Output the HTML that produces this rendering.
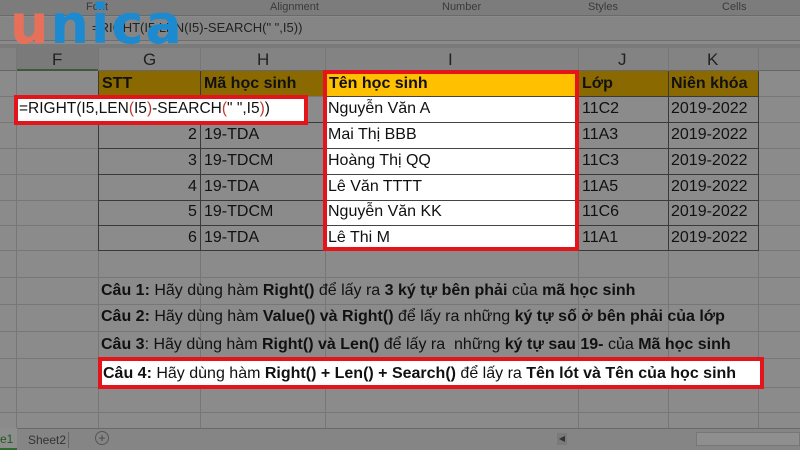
<!DOCTYPE html>
<html><head><meta charset="utf-8"><style>
*{margin:0;padding:0;box-sizing:border-box}
body{width:800px;height:450px;overflow:hidden;background:#8b8b8b;font-family:"Liberation Sans",sans-serif;position:relative}
.a{position:absolute}
.t{position:absolute;font-size:16px;color:#111;white-space:nowrap;line-height:26px}
.hl{position:absolute;background:#777;height:1px}
.vl{position:absolute;background:#777;width:1px}
b{font-weight:bold}
</style></head><body>
<div class="a" style="left:0;top:0;width:800px;height:16px;background:#7c7c7c;border-bottom:1px solid #6a6a6a"></div>
<div class="a" style="left:0;top:1px;width:800px;font-size:11px;color:#3a3a3a">
<span class="a" style="left:86px">Font</span><span class="a" style="left:270px">Alignment</span><span class="a" style="left:442px">Number</span><span class="a" style="left:588px">Styles</span><span class="a" style="left:722px">Cells</span></div>
<div class="a" style="left:0;top:17px;width:800px;height:24px;background:#858585;border-bottom:1px solid #6e6e6e"></div>
<div class="a" style="left:92px;top:20px;font-size:13px;color:#222">=RIGHT(I5,LEN(I5)-SEARCH(" ",I5))</div>
<div class="a" style="left:0;top:44px;width:800px;height:4px;background:#7a7a7a"></div>
<div class="a" style="left:0;top:48px;width:800px;height:23px;background:#838383;border-bottom:1px solid #666"></div>
<div class="a" style="left:16px;top:48px;width:82px;height:23px;background:#7a7a7a;border-bottom:2px solid #3d5a3d"></div>
<div class="a" style="top:50px;left:0;width:800px;font-size:17px;color:#222">
<span class="a" style="left:52px">F</span><span class="a" style="left:143px">G</span><span class="a" style="left:257px">H</span><span class="a" style="left:448px">I</span><span class="a" style="left:618px">J</span><span class="a" style="left:707px">K</span></div>
<div class="vl" style="left:16px;top:48px;height:380px"></div>
<div class="vl" style="left:98px;top:48px;height:380px"></div>
<div class="vl" style="left:200px;top:48px;height:380px"></div>
<div class="vl" style="left:325px;top:48px;height:380px"></div>
<div class="vl" style="left:578px;top:48px;height:380px"></div>
<div class="vl" style="left:668px;top:48px;height:380px"></div>
<div class="vl" style="left:758px;top:48px;height:380px"></div>
<div class="hl" style="left:0;top:96px;width:800px"></div>
<div class="hl" style="left:0;top:122px;width:800px"></div>
<div class="hl" style="left:0;top:148px;width:800px"></div>
<div class="hl" style="left:0;top:174px;width:800px"></div>
<div class="hl" style="left:0;top:200px;width:800px"></div>
<div class="hl" style="left:0;top:225px;width:800px"></div>
<div class="hl" style="left:0;top:250px;width:800px"></div>
<div class="hl" style="left:0;top:277px;width:800px"></div>
<div class="hl" style="left:0;top:304px;width:800px"></div>
<div class="hl" style="left:0;top:331px;width:800px"></div>
<div class="hl" style="left:0;top:358px;width:800px"></div>
<div class="hl" style="left:0;top:387px;width:800px"></div>
<div class="hl" style="left:0;top:412px;width:800px"></div>
<div class="a" style="left:99px;top:71px;width:226px;height:25px;background:#8a6a00"></div>
<div class="a" style="left:579px;top:71px;width:179px;height:25px;background:#8a6a00"></div>
<div class="vl" style="left:200px;top:71px;height:180px;background:#3a3a3a"></div>
<div class="vl" style="left:98px;top:71px;height:180px;background:#3a3a3a"></div>
<div class="vl" style="left:668px;top:71px;height:180px;background:#3a3a3a"></div>
<div class="vl" style="left:758px;top:71px;height:180px;background:#3a3a3a"></div>
<div class="a" style="left:98px;top:122px;width:227px;height:1px;background:#3a3a3a"></div>
<div class="a" style="left:98px;top:148px;width:227px;height:1px;background:#3a3a3a"></div>
<div class="a" style="left:98px;top:174px;width:227px;height:1px;background:#3a3a3a"></div>
<div class="a" style="left:98px;top:200px;width:227px;height:1px;background:#3a3a3a"></div>
<div class="a" style="left:98px;top:225px;width:227px;height:1px;background:#3a3a3a"></div>
<div class="a" style="left:98px;top:250px;width:227px;height:1px;background:#3a3a3a"></div>
<div class="a" style="left:578px;top:96px;width:181px;height:155px;border-top:1px solid #3a3a3a;border-bottom:1px solid #3a3a3a"></div>
<div class="a" style="left:578px;top:122px;width:181px;height:1px;background:#3a3a3a"></div>
<div class="a" style="left:578px;top:148px;width:181px;height:1px;background:#3a3a3a"></div>
<div class="a" style="left:578px;top:174px;width:181px;height:1px;background:#3a3a3a"></div>
<div class="a" style="left:578px;top:200px;width:181px;height:1px;background:#3a3a3a"></div>
<div class="a" style="left:578px;top:225px;width:181px;height:1px;background:#3a3a3a"></div>
<div class="a" style="left:323px;top:70px;width:256px;height:181px;border:4px solid #e4141b;background:#fff"></div>
<div class="a" style="left:327px;top:74px;width:248px;height:22px;background:#ffc000"></div>
<div class="a" style="left:327px;top:96px;width:248px;height:1px;background:#444"></div>
<div class="a" style="left:327px;top:122px;width:248px;height:1px;background:#444"></div>
<div class="a" style="left:327px;top:148px;width:248px;height:1px;background:#444"></div>
<div class="a" style="left:327px;top:174px;width:248px;height:1px;background:#444"></div>
<div class="a" style="left:327px;top:200px;width:248px;height:1px;background:#444"></div>
<div class="a" style="left:327px;top:225px;width:248px;height:1px;background:#444"></div>
<div class="t" style="left:102px;top:71px"><b>STT</b></div>
<div class="t" style="left:204px;top:71px"><b>Mã học sinh</b></div>
<div class="t" style="left:329px;top:71px"><b>Tên học sinh</b></div>
<div class="t" style="left:582px;top:71px"><b>Lớp</b></div>
<div class="t" style="left:671px;top:71px"><b>Niên khóa</b></div>
<div class="t" style="left:188px;top:122px">2</div><div class="t" style="left:204px;top:122px">19-TDA</div>
<div class="t" style="left:188px;top:148px">3</div><div class="t" style="left:204px;top:148px">19-TDCM</div>
<div class="t" style="left:188px;top:174px">4</div><div class="t" style="left:204px;top:174px">19-TDA</div>
<div class="t" style="left:188px;top:199px">5</div><div class="t" style="left:204px;top:199px">19-TDCM</div>
<div class="t" style="left:188px;top:225px">6</div><div class="t" style="left:204px;top:225px">19-TDA</div>
<div class="t" style="left:328px;top:96px">Nguyễn Văn A</div>
<div class="t" style="left:328px;top:122px">Mai Thị BBB</div>
<div class="t" style="left:328px;top:148px">Hoàng Thị QQ</div>
<div class="t" style="left:328px;top:174px">Lê Văn TTTT</div>
<div class="t" style="left:328px;top:199px">Nguyễn Văn KK</div>
<div class="t" style="left:328px;top:225px">Lê Thi M</div>
<div class="t" style="left:582px;top:96px">11C2</div><div class="t" style="left:671px;top:96px">2019-2022</div>
<div class="t" style="left:582px;top:122px">11A3</div><div class="t" style="left:671px;top:122px">2019-2022</div>
<div class="t" style="left:582px;top:148px">11C3</div><div class="t" style="left:671px;top:148px">2019-2022</div>
<div class="t" style="left:582px;top:174px">11A5</div><div class="t" style="left:671px;top:174px">2019-2022</div>
<div class="t" style="left:582px;top:199px">11C6</div><div class="t" style="left:671px;top:199px">2019-2022</div>
<div class="t" style="left:582px;top:225px">11A1</div><div class="t" style="left:671px;top:225px">2019-2022</div>
<div class="a" style="left:14px;top:95px;width:294px;height:30px;border:4px solid #e4141b;background:#fff"></div>
<div class="t" style="left:19px;top:96px;font-size:15.5px">=RIGHT(I5,LEN<span style="color:#c0392b">(</span>I5<span style="color:#c0392b">)</span>-SEARCH<span style="color:#c0392b">(</span>" ",I5<span style="color:#c0392b">)</span>)</div>
<div class="t" style="left:101px;top:278px"><b>Câu 1:</b> Hãy dùng hàm <b>Right()</b> để lấy ra <b>3 ký tự bên phải</b> của <b>mã học sinh</b></div>
<div class="t" style="left:101px;top:304px"><b>Câu 2:</b> Hãy dùng hàm <b>Value() và Right()</b> để lấy ra những <b>ký tự số ở bên phải của lớp</b></div>
<div class="t" style="left:101px;top:332px"><b>Câu 3</b>: Hãy dùng hàm <b>Right() và Len()</b> để lấy ra &nbsp;những <b>ký tự sau 19-</b> của <b>Mã học sinh</b></div>
<div class="a" style="left:98px;top:357px;width:666px;height:32px;border:4px solid #e4141b;background:#fff"></div>
<div class="t" style="left:103px;top:361px"><b>Câu 4:</b> Hãy dùng hàm <b>Right() + Len() + Search()</b> để lấy ra <b>Tên lót và Tên của học sinh</b></div>
<div class="a" style="left:0;top:428px;width:800px;height:22px;background:#858585;border-top:1px solid #6a6a6a"></div>
<div class="a" style="left:0;top:428px;width:17px;height:22px;background:#8e8e8e;border-bottom:2px solid #2f6b2f;font-size:12px;color:#1f5a1f;line-height:22px">e1</div>
<div class="a" style="left:28px;top:433px;font-size:12px;color:#333">Sheet2</div>
<div class="vl" style="left:68px;top:432px;height:16px;background:#666"></div>
<div class="a" style="left:95px;top:431px;width:14px;height:14px;border:1px solid #555;border-radius:50%;font-size:12px;line-height:12px;text-align:center;color:#444">+</div>
<div class="a" style="left:557px;top:433px;width:10px;height:12px;background:#7a7a7a;font-size:8px;color:#333;text-align:center;line-height:12px">◀</div>
<div class="a" style="left:696px;top:432px;width:104px;height:14px;background:#8f8f8f;border:1px solid #777"></div>
<div class="a" style="left:10px;top:-2px;font-family:'DejaVu Sans',sans-serif;font-weight:bold;font-size:54px;letter-spacing:2px;line-height:54px"><span style="color:#e8705a">u</span><span style="color:#1d8ad0">nica</span></div>
</body></html>
